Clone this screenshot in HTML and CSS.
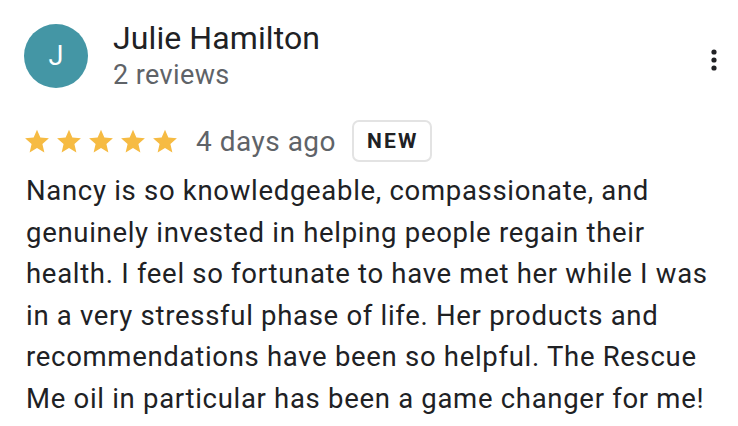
FILE: index.html
```html
<!DOCTYPE html>
<html>
<head>
<meta charset="utf-8">
<link rel="stylesheet" href="styles.css">
</head>
<body>
<div class="review">
  <div class="header">
    <div class="avatar">J</div>
    <div class="who">
      <div class="name">Julie Hamilton</div>
      <div class="count">2 reviews</div>
    </div>
    <div class="more">
      <svg width="6" height="22" viewBox="0 0 6 22"><circle cx="3" cy="3" r="2.6" fill="#202124"/><circle cx="3" cy="11" r="2.6" fill="#202124"/><circle cx="3" cy="19" r="2.6" fill="#202124"/></svg>
    </div>
  </div>
  <div class="meta">
    <div class="stars">
      <svg class="star" viewBox="0 0 24 24"><path d="M12 1.5l3.1 7.3 7.9.7-6 5.2 1.8 7.8L12 18.4l-6.8 4.1 1.8-7.8-6-5.2 7.9-.7z"/></svg>
      <svg class="star" viewBox="0 0 24 24"><path d="M12 1.5l3.1 7.3 7.9.7-6 5.2 1.8 7.8L12 18.4l-6.8 4.1 1.8-7.8-6-5.2 7.9-.7z"/></svg>
      <svg class="star" viewBox="0 0 24 24"><path d="M12 1.5l3.1 7.3 7.9.7-6 5.2 1.8 7.8L12 18.4l-6.8 4.1 1.8-7.8-6-5.2 7.9-.7z"/></svg>
      <svg class="star" viewBox="0 0 24 24"><path d="M12 1.5l3.1 7.3 7.9.7-6 5.2 1.8 7.8L12 18.4l-6.8 4.1 1.8-7.8-6-5.2 7.9-.7z"/></svg>
      <svg class="star" viewBox="0 0 24 24"><path d="M12 1.5l3.1 7.3 7.9.7-6 5.2 1.8 7.8L12 18.4l-6.8 4.1 1.8-7.8-6-5.2 7.9-.7z"/></svg>
    </div>
    <span class="ago">4 days ago</span>
    <span class="badge">NEW</span>
  </div>
  <p class="text">Nancy is so knowledgeable, compassionate, and genuinely invested in helping people regain their health. I feel so fortunate to have met her while I was in a very stressful phase of life. Her products and recommendations have been so helpful. The Rescue Me oil in particular has been a game changer for me!</p>
</div>
</body>
</html>
```
FILE: styles.css
```css
html, body { margin: 0; padding: 0; background: #fff; }
body { font-family: Roboto, "Noto Sans", Arial, sans-serif; color: #202124; }
.review { padding: 24px 24px 0 24px; width: 738px; box-sizing: border-box; }
.header { display: flex; align-items: flex-start; }
.avatar {
  width: 64px; height: 64px; border-radius: 50%;
  background: #4496a5; color: #fff;
  display: flex; align-items: center; justify-content: center;
  font-size: 27px; flex: none;
}
.who { margin-left: 25px; flex: 1; }
.name { font-size: 32px; line-height: 32px; margin-top: -2px; color: #202124; letter-spacing: 0.1px; }
.count { font-size: 27px; line-height: 32px; margin-top: 5px; color: #5f6368; letter-spacing: 0.4px; }
.more { padding-top: 25px; margin-right: -3px; }
.meta { display: flex; align-items: center; margin-top: 29px; height: 42px; }
.stars { display: flex; gap: 6px; }
.star { width: 26px; height: 26px; fill: #f6bb43; }
.ago { font-size: 28px; color: #5f6368; margin-left: 18px; letter-spacing: 0.5px; }
.badge {
  margin-left: 16px; border: 2px solid #e3e3e3; border-radius: 7px;
  height: 42px; box-sizing: border-box; padding: 0 11px 0 13px;
  display: flex; align-items: center;
  font-size: 21px; font-weight: 700; letter-spacing: 2.2px; color: #202124;
}
.text { margin: 8px 0 0 2px; font-size: 27.5px; line-height: 41.5px; color: #202124; width: 700px; letter-spacing: 0.7px; }
```
